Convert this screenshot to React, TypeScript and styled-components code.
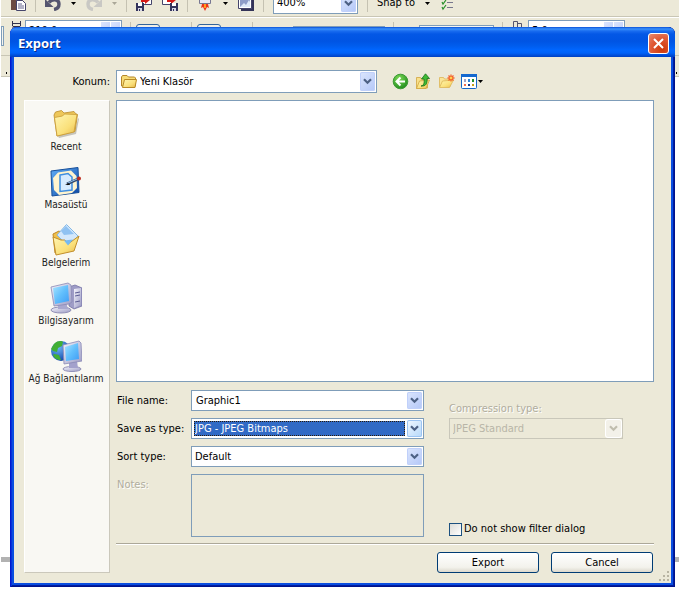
import React, { useState } from "react";
import styled, { createGlobalStyle, css } from "styled-components";

const face = "#ece9d8";
const fieldBorder = "#7f9db9";

const GlobalStyle = createGlobalStyle`
  * { box-sizing: border-box; }
  body {
    margin: 0;
    background: #fff;
    color: #000;
    font: 11px/14px "DejaVu Sans Condensed", "DejaVu Sans", sans-serif;
  }
  button, input, select, textarea { font: inherit; color: inherit; margin: 0; }
  svg { display: block; flex: none; }
`;

/* ---------- application behind the dialog ---------- */

const Page = styled.div`
  position: relative;
  min-height: 100vh;
  overflow: hidden;
`;

const Workspace = styled.div`
  margin-top: -10px;
  border-left: 1px solid #fff;
`;

const Toolbar = styled.div`
  display: flex;
  align-items: center;
  gap: 10px;
  height: 27px;
  padding-left: 10px;
  background: ${face};
  border-bottom: 1px solid #c9c6b5;
`;

const PropertyBar = styled.div`
  display: flex;
  align-items: flex-start;
  height: 39px;
  padding-top: 2px;
  background: ${face};
  border-top: 1px solid #fff;
  border-bottom: 1px solid #c9c6b5;
`;

const Ruler = styled.div`
  display: flex;
  justify-content: space-between;
  align-items: flex-end;
  height: 21px;
  padding: 0 2px 2px 5px;
  background: ${face};
  border-bottom: 1px solid #c9c6b5;
`;

const Tick = styled.i`
  width: 1px;
  height: 2px;
  background: #000;
`;

const PageEdge = styled.div`
  height: 5px;
  margin-top: 480px;
  background: #b2b2b2;
`;

const Divider = styled.i`
  flex: none;
  width: 1px;
  height: 18px;
  margin: 0 -1px;
  background: #c5c2b2;
`;

const ToolButton = styled.button<{ $width?: number }>`
  flex: none;
  display: flex;
  justify-content: center;
  width: ${(p) => p.$width ?? 16}px;
  padding: 0;
  border: 0;
  background: none;
`;

const TextTool = styled.button`
  flex: none;
  padding: 0;
  border: 0;
  background: none;
`;

const PropertySlot = styled.div<{ $before: number; $width: number; $top?: number }>`
  flex: none;
  width: ${(p) => p.$width}px;
  margin: ${(p) => p.$top ?? 0}px 0 0 ${(p) => p.$before}px;
`;

const Spinner = styled.div`
  display: flex;
  height: 21px;
  padding: 1px;
  background: #fff;
  border: 1px solid ${fieldBorder};
`;

const SpinnerInput = styled.input`
  flex: 1;
  min-width: 0;
  padding: 0 2px;
  border: 0;
  background: none;
  outline: 0;
`;

const SpinnerKey = styled.button`
  width: 9px;
  margin-left: 1px;
  padding: 0;
  border: 0;
  background: linear-gradient(135deg, #dbe4fd, #b4c8f6);
`;

const Toggle = styled.button`
  display: block;
  width: 100%;
  height: 20px;
  border: 1px solid #33659b;
  border-radius: 3px;
  background: #f1efe6;
`;

const FlatField = styled.div`
  height: 20px;
  border: 1px solid ${fieldBorder};
  background: #f6f5ee;
`;

const Stroke = styled.i`
  display: block;
  width: 1px;
  height: 20px;
  background: #c5c2b2;
`;

/* ---------- dialog ---------- */

const Dialog = styled.section`
  position: absolute;
  top: 27px;
  left: 10px;
  right: 4px;
  padding: 0 4px 4px;
  border-radius: 7px 7px 0 0;
  background: #0a4ee0;
  box-shadow: inset 1px 0 #0019cf, inset -1px 0 #00138c, inset 0 -1px #00138c,
    inset 2px 0 #0831d9, inset -2px 0 #001da0, inset 0 -2px #001da0;
`;

const TitleBar = styled.header`
  display: flex;
  align-items: center;
  justify-content: space-between;
  height: 30px;
  margin: 0 -4px;
  padding: 2px 6px 0 8px;
  border-radius: 7px 7px 0 0;
  background: linear-gradient(
    #0a50d8 0, #3a92fb 2px, #1a6cf0 4px, #0458e6 7px, #0054e3 14px,
    #005dee 19px, #0066ff 23px, #0062f8 26px, #0050dd 28px, #0040c0 30px
  );
`;

const Title = styled.h1`
  margin: 0;
  color: #fff;
  font: bold 13px/18px "Open Sans", "Noto Sans", sans-serif;
  text-shadow: 1px 1px #0a2a86;
`;

const CloseButton = styled.button`
  display: grid;
  place-items: center;
  width: 21px;
  height: 21px;
  padding: 0;
  border: 1px solid #fff;
  border-radius: 3px;
  background: radial-gradient(circle at 70% 80%, #cf3a0a, #e05a37 55%, #e98b70);
`;

const Body = styled.div`
  display: grid;
  grid-template-columns: 86px minmax(0, 1fr);
  gap: 7px 6px;
  padding: 13px 17px 10px 10px;
  background: ${face};
`;

const LookInLabel = styled.label`
  justify-self: end;
  align-self: center;
`;

const LookInRow = styled.div`
  display: flex;
  align-items: center;
`;

const LookInTools = styled.div`
  display: flex;
  align-items: center;
  gap: 6px;
  margin-left: 15px;
`;

const Places = styled.nav`
  display: flex;
  flex-direction: column;
  gap: 12px;
  padding: 7px 2px 0 0;
  background: #f9f8f3;
  border: 1px solid #fff;
  border-right-color: #cbc8bb;
  border-bottom-color: #cbc8bb;
  font-size: 10px;
`;

const Place = styled.a`
  display: flex;
  flex-direction: column;
  align-items: center;
  color: #222;
  text-decoration: none;
  white-space: nowrap;
`;

const Main = styled.main`
  display: flex;
  flex-direction: column;
`;

const FileList = styled.div`
  height: 282px;
  background: #fff;
  border: 1px solid ${fieldBorder};
`;

const Form = styled.form`
  display: grid;
  grid-template-columns: minmax(0, 1fr) 205px;
  gap: 25px;
  margin-top: 8px;
`;

const Fields = styled.div`
  display: grid;
  grid-template-columns: 75px minmax(0, 1fr);
  row-gap: 7px;
`;

const Options = styled.div`
  display: flex;
  flex-direction: column;
  padding-top: 12px;
`;

const etched = css`
  color: #b0ad9e;
  text-shadow: 1px 1px #fff;
`;

const FieldLabel = styled.label<{ $disabled?: boolean }>`
  padding: 4px 0 0 1px;
  white-space: nowrap;
  ${(p) => p.$disabled && etched}
`;

const CompressionLabel = styled.label`
  margin-bottom: 2px;
  ${etched}
`;

const Frame = styled.div<{ $disabled?: boolean; $tall?: boolean; $wide?: boolean }>`
  display: flex;
  gap: 1px;
  height: ${(p) => (p.$tall ? 23 : 21)}px;
  ${(p) => p.$wide && "flex: 0 1 261px;"}
  padding: 1px;
  border: 1px solid ${(p) => (p.$disabled ? "#c9c7ba" : fieldBorder)};
  background: ${(p) => (p.$disabled ? face : "#fff")};
  color: ${(p) => (p.$disabled ? "#aca899" : "#000")};
`;

const CompressionFrame = styled(Frame)`
  width: 174px;
`;

const Select = styled.select<{ $focused?: boolean }>`
  appearance: none;
  flex: 1;
  min-width: 0;
  margin: 1px;
  padding: 0 1px;
  border: 0;
  border-radius: 0;
  outline: 0;
  background: none;
  opacity: 1;
  &:disabled { color: #b8b5a7; opacity: 1; }
  ${(p) =>
    p.$focused &&
    css`
      color: #fff;
      background: #316ac5;
      outline: 1px dotted #2a1a08;
      outline-offset: -1px;
    `}
`;

const TextField = styled.input`
  flex: 1;
  min-width: 0;
  padding: 0 3px;
  border: 0;
  outline: 0;
  background: none;
`;

const ArrowCap = styled.span<{ $disabled?: boolean; $hot?: boolean }>`
  flex: none;
  display: grid;
  place-items: center;
  width: 15px;
  border-radius: 2px;
  pointer-events: none;
  color: ${(p) => (p.$disabled ? "#c0bdae" : "#4d6185")};
  background: ${(p) =>
    p.$disabled
      ? "#f3f1e9"
      : p.$hot
        ? "linear-gradient(135deg, #f2f8ff, #b5d8fa)"
        : "linear-gradient(135deg, #dce6fd, #b3c7f8)"};
  box-shadow: ${(p) => (p.$disabled ? "0 0 0 1px #fff" : p.$hot ? "inset 0 0 0 1px #9cc4f2" : "inset 0 0 0 1px #c0d0fa")};
`;

const Notes = styled.textarea`
  display: block;
  width: 100%;
  height: 63px;
  resize: none;
  border: 1px solid ${fieldBorder};
  border-radius: 0;
  background: ${face};
`;

const Check = styled.label`
  display: flex;
  align-items: center;
  gap: 2px;
  margin-top: auto;
  padding-bottom: 1px;
  white-space: nowrap;
`;

const CheckBox = styled.input`
  appearance: none;
  width: 13px;
  height: 13px;
  border: 1px solid #1c5180;
  background: linear-gradient(135deg, #dcdcd7, #fff);
  &:checked { background: #21a121; box-shadow: inset 0 0 0 2px #fff; }
`;

const Rule = styled.hr`
  width: 100%;
  height: 2px;
  margin: 6px 0 7px;
  border: 0;
  border-top: 1px solid #aca899;
  border-bottom: 1px solid #fff;
`;

const Actions = styled.footer`
  display: flex;
  justify-content: flex-end;
  gap: 12px;
  padding-right: 1px;
`;

const PushButton = styled.button`
  width: 102px;
  height: 21px;
  padding: 0;
  border: 1px solid #003c74;
  border-radius: 3px;
  background: linear-gradient(#fff, #f3f2ec 75%, #dcd8cc);
`;

const Grip = styled.svg`
  position: absolute;
  right: 5px;
  bottom: 5px;
`;

/* ---------- drawings ---------- */

const Chevron = () => (
  <svg width="9" height="7" viewBox="0 0 9 7" aria-hidden="true">
    <path d="M1 1.2 4.5 4.7 8 1.2" fill="none" stroke="currentColor" strokeWidth="2.2" />
  </svg>
);

const DownMark = ({ color = "#000" }: { color?: string }) => (
  <svg width="5" height="3" viewBox="0 0 5 3" aria-hidden="true">
    <path d="M0 0h5L2.5 3z" fill={color} />
  </svg>
);

const CurvedArrow = ({ color, flip }: { color: string; flip?: boolean }) => (
  <svg width="16" height="16" viewBox="0 0 16 16" aria-hidden="true">
    <g transform={flip ? "translate(16 0) scale(-1 1)" : undefined}>
      <path d="M4 7.500C7 3.500 14 4 14 9c0 3-2 5-5 5.500" fill="none" stroke={color} strokeWidth="3.400" />
      <path d="M0 4v8h8.500z" fill={color} />
    </g>
  </svg>
);

const PasteIcon = () => (
  <svg width="15" height="16" viewBox="0 0 15 16" aria-hidden="true">
    <path d="M0 0h12v15H0z" fill="#6b4b42" />
    <path d="M5.500 5.500h6l3 3v7h-9z" fill="#fff" stroke="#45456b" />
    <path d="M7 9h4M7 11h6M7 13h6" stroke="#66668e" />
  </svg>
);

const Disk = ({ x }: { x: number }) => (
  <g transform={`translate(${x} 8)`}>
    <path d="M0 0h8v8H0z" fill="#34345c" />
    <path d="M2 0h4v3H2z" fill="#fff" />
    <path d="M2 5h4v3H2z" fill="#d8d8e6" />
    <path d="M3 6h1v2H3z" fill="#34345c" />
  </g>
);

const ImportIcon = () => (
  <svg width="16" height="16" viewBox="0 0 16 16" aria-hidden="true">
    <path d="M6.500-1h9v10.500h-9z" fill="#fff" stroke="#45456b" />
    <path d="M5 4h4V1l5 4-5 4V7H5z" fill="#d51b18" />
    <Disk x={0} />
  </svg>
);

const ExportIcon = () => (
  <svg width="16" height="16" viewBox="0 0 16 16" aria-hidden="true">
    <path d="M.500-1h9v10.500h-9z" fill="#fff" stroke="#45456b" />
    <path d="M5 4h4V1l5 4-5 4V7H5z" fill="#d51b18" />
    <Disk x={8} />
  </svg>
);

const LauncherIcon = () => (
  <svg width="16" height="16" viewBox="0 0 16 16" aria-hidden="true">
    <path d="M2.500-1h11v9.500h-11z" fill="#e9eaf5" stroke="#777792" />
    <path d="M5 9h6l1 4-2-1-2 4-2-4-2 1z" fill="#ee351d" />
    <path d="M7 9h2v4H7z" fill="#ff9d20" />
  </svg>
);

const WelcomeIcon = () => (
  <svg width="16" height="16" viewBox="0 0 16 16" aria-hidden="true">
    <path d="M3 3h13v13H3z" fill="#343458" />
    <path d="M.500.500h13v13H.500z" fill="#fff" stroke="#45456b" />
    <path d="M2 3h10v9H2z" fill="#8d9cc8" />
    <path d="m2 12 4-4 2 2 3-5 1 2v5z" fill="#dde8f8" />
  </svg>
);

const OptionsIcon = () => (
  <svg width="14" height="16" viewBox="0 0 14 16" aria-hidden="true">
    <path d="M6 2.500h6M6 7.500h6M6 12.500h6" stroke="#77778c" />
    <path d="m1 2 1 2 3-4M1 7l1 2 3-4M1 12l1 2 3-4" fill="none" stroke="#27902a" strokeWidth="1.200" />
  </svg>
);

const WidthIcon = () => (
  <svg width="9" height="9" viewBox="0 0 9 9" aria-hidden="true">
    <path d="M.500 0v5M8.500 0v5M0 2.500h9M1 5.500h7v4H1z" fill="none" stroke="#33334d" />
  </svg>
);

const OffsetIcon = () => (
  <svg width="9" height="9" viewBox="0 0 9 9" aria-hidden="true">
    <path d="M.500.500h4v9h-4zM4.500 2.500h4v7h-4z" fill="none" stroke="#55556d" />
  </svg>
);

const SharedGradients = () => (
  <svg width="0" height="0" viewBox="0 0 1 1" aria-hidden="true">
    <defs>
      <linearGradient id="gold" x1="0" y1="0" x2="1" y2="1">
        <stop offset="0" stopColor="#fff6b4" />
        <stop offset=".6" stopColor="#fae07a" />
        <stop offset="1" stopColor="#e6b649" />
      </linearGradient>
      <linearGradient id="screen" x1="0" y1="0" x2="1" y2="1">
        <stop offset="0" stopColor="#a7e4ff" />
        <stop offset=".5" stopColor="#62bffc" />
        <stop offset="1" stopColor="#3f9df5" />
      </linearGradient>
      <linearGradient id="metal" x1="0" y1="0" x2="1" y2="1">
        <stop offset="0" stopColor="#f4f4fc" />
        <stop offset="1" stopColor="#9c9bc4" />
      </linearGradient>
      <linearGradient id="royal" x1="0" y1="0" x2="1" y2="1">
        <stop offset="0" stopColor="#61aef6" />
        <stop offset="1" stopColor="#0c47a5" />
      </linearGradient>
      <radialGradient id="leaf" cx=".4" cy=".3" r=".8">
        <stop offset="0" stopColor="#7edb56" />
        <stop offset="1" stopColor="#178418" />
      </radialGradient>
      <radialGradient id="sea" cx=".35" cy=".3" r=".8">
        <stop offset="0" stopColor="#6fb9fa" />
        <stop offset="1" stopColor="#0c3da0" />
      </radialGradient>
    </defs>
  </svg>
);

const SmallFolder = () => (
  <svg width="16" height="15" viewBox="0 0 16 15" aria-hidden="true">
    <path d="M.500 12V3l1-1.500h4.500L7.500 3h6l1 1v8z" fill="#f7dc78" stroke="#b5862a" />
    <path d="m1.500 13.500 2-8h12l-1.500 8z" fill="url(#gold)" stroke="#b98a26" />
  </svg>
);

const BackIcon = () => (
  <svg width="17" height="17" viewBox="0 0 17 17" aria-hidden="true">
    <circle cx="8.500" cy="8.500" r="7.300" fill="url(#leaf)" stroke="#3c9a35" />
    <path d="M13 8.500H5M8.500 4.500l-4 4 4 4" fill="none" stroke="#fff" strokeWidth="2" />
  </svg>
);

const UpIcon = () => (
  <svg width="17" height="17" viewBox="0 0 17 17" aria-hidden="true">
    <path d="M1.500 15.500v-11h4l1 1.500h6v9z" fill="#f8e08a" stroke="#d0a440" strokeWidth=".8" />
    <path d="m1.500 15.500 3-7.500 10-1-3.500 8.500z" fill="url(#gold)" stroke="#d0a440" strokeWidth=".8" />
    <path d="M6 13c3-.500 3.500-3 3-7H6.500L10.500.800 14.500 5.500H12c.500 5-1 8-6 7.500z" fill="#3fba35" stroke="#18711a" strokeWidth=".8" />
  </svg>
);

const NewFolderIcon = () => (
  <svg width="17" height="17" viewBox="0 0 17 17" aria-hidden="true">
    <path d="M1.500 13.500v-9h4l1 1.500H12v7.500z" fill="#fae596" stroke="#dcb555" strokeWidth=".8" />
    <path d="m1.500 14.500 3-6.500 11-1-4 7.500z" fill="url(#gold)" stroke="#dcb555" strokeWidth=".8" />
    <path d="M13 1.500v7M9.500 5h7M10.500 2.500l5 5M15.500 2.500l-5 5" stroke="#f3622b" strokeWidth="1.300" />
    <circle cx="13" cy="5" r="1.300" fill="#ffd24d" />
  </svg>
);

const ViewIcon = () => (
  <svg width="16" height="15" viewBox="0 0 16 15" aria-hidden="true">
    <rect x=".5" y=".5" width="15" height="14" rx="1" fill="#fff" stroke="#1468c8" />
    <path d="M0 0h16v3H0z" fill="#1569cf" />
    <path d="M3 5h2v3H3z" fill="#a3a3c6" />
    <path d="M7 5h2v3H7z" fill="#2d85d8" />
    <path d="M11 5h2v3h-2z" fill="#22902b" />
    <path d="M3 10h2v2H3z" fill="#f3714c" />
    <path d="M7 10h2v2H7z" fill="#12398c" />
    <path d="M11 10h2v2h-2z" fill="#c7a014" />
  </svg>
);

const RecentIcon = () => (
  <svg width="32" height="32" viewBox="0 0 32 32" aria-hidden="true">
    <path d="m8 28 17-4 3-14 1 1-3 15-17 4z" fill="#7a7567" opacity=".4" />
    <path d="M4 7 5.500 4l6-1.500L14 5l10-1.500 1.500 2 2 1-2.500 17L7 28z" fill="#eec75a" stroke="#b98b2c" strokeWidth=".8" />
    <path d="m4.500 9.500 8-1.500 2-2 12.500.500L24 24 7 28z" fill="url(#gold)" stroke="#c99a35" strokeWidth=".8" />
  </svg>
);

const DesktopIcon = () => (
  <svg width="32" height="32" viewBox="0 0 32 32" aria-hidden="true">
    <path d="m1 5 27-3.500 1 25L2 30z" fill="url(#royal)" stroke="#174f99" />
    <path d="m8 6.500 13-2 5.500 5.500.500 12-5 5-13 2-5-5-1-12z" fill="#fff4ce" />
    <path d="m10 9 8-1.500 4 3.500v13l-12 1.500z" fill="#d6ebff" stroke="#3f8ee0" strokeWidth="1.500" />
    <path d="m17 18 11-5" stroke="#32496d" strokeWidth="3" />
    <path d="m18 17 9-4" stroke="#91c1ee" />
    <path d="m15 19 4-2 1 2z" fill="#111" />
    <circle cx="29" cy="12.500" r="2" fill="#bd2b1d" />
  </svg>
);

const DocumentsIcon = () => (
  <svg width="32" height="32" viewBox="0 0 32 32" aria-hidden="true">
    <path d="m3 10 6-3 3 2 14 3-3 14-18 3z" fill="#f0bf4a" stroke="#bd8827" />
    <path d="M16.500.500 28 12 19 23 7 11z" fill="#d3e8fc" stroke="#84b8e5" />
    <path d="m11 7 5-5 8 8-10 1z" fill="#8fc2f2" />
    <path d="m3 13 8 3 4 0 3 4L29 12l-5 15-18 4z" fill="url(#gold)" stroke="#c28f2c" />
    <path d="m14 16.500 9-1-5 6z" fill="#75baf3" />
  </svg>
);

const ComputerIcon = () => (
  <svg width="32" height="32" viewBox="0 0 32 32" aria-hidden="true">
    <path d="m19 5 6-2 7 3v18l-8 3-5-3z" fill="#9e9cc6" stroke="#7775a6" strokeWidth=".8" />
    <path d="m24 7 7-1v17l-7 3z" fill="url(#metal)" />
    <path d="m25 11 5-1M25 14l5-1M25 20l5-1" stroke="#5c5d94" />
    <ellipse cx="11" cy="28" rx="10" ry="3" fill="url(#metal)" stroke="#9190b7" />
    <path d="m8 21 8-1 2 7H8z" fill="#a9a8cf" />
    <path d="m1 5 17-4 3 2 1 17-3 2-15 2z" fill="url(#metal)" stroke="#8a89b5" strokeWidth=".8" />
    <path d="m3 6 15-3 1 16-14 3z" fill="url(#screen)" />
  </svg>
);

const NetworkIcon = () => (
  <svg width="32" height="32" viewBox="0 0 32 32" aria-hidden="true">
    <circle cx="11" cy="11" r="10" fill="url(#sea)" />
    <path d="M4 4c4-4 8-3 9-2l-1 4-4 2-1 4-4-1-2-2zM4 14l5 1 2 5c-4 0-7-2-8-5z" fill="#42af35" />
    <ellipse cx="22" cy="29" rx="9" ry="2.500" fill="url(#metal)" stroke="#9190b7" />
    <path d="m19 22 8-1 1 7h-9z" fill="#a3a1cc" />
    <path d="m13 5 16-4 2 2 1 18-18 3z" fill="url(#metal)" stroke="#8a89b5" strokeWidth=".8" />
    <path d="m15 7 13-4 1 16-13 2z" fill="url(#screen)" />
  </svg>
);

const places = [
  { name: "Recent", icon: <RecentIcon /> },
  { name: "Masaüstü", icon: <DesktopIcon /> },
  { name: "Belgelerim", icon: <DocumentsIcon /> },
  { name: "Bilgisayarım", icon: <ComputerIcon /> },
  { name: "Ağ Bağlantılarım", icon: <NetworkIcon /> },
];

const ZoomFrame = styled(Frame)`
  flex: none;
  width: 85px;
`;

const FolderSlot = styled.span`
  align-self: center;
  margin-left: 3px;
`;

const ViewButton = styled.button`
  display: flex;
  align-items: center;
  gap: 1px;
  padding: 0;
  border: 0;
  background: none;
`;

const Application = () => (
  <Workspace>
    <Toolbar>
      <ToolButton $width={15} aria-label="Paste"><PasteIcon /></ToolButton>
      <Divider />
      <ToolButton aria-label="Undo"><CurvedArrow color="#55556f" /></ToolButton>
      <ToolButton $width={5} aria-label="Undo list"><DownMark /></ToolButton>
      <ToolButton aria-label="Redo"><CurvedArrow color="#c9c8c4" flip /></ToolButton>
      <ToolButton $width={5} aria-label="Redo list"><DownMark color="#aaa798" /></ToolButton>
      <Divider />
      <ToolButton aria-label="Import"><ImportIcon /></ToolButton>
      <ToolButton aria-label="Export file"><ExportIcon /></ToolButton>
      <Divider />
      <ToolButton aria-label="Application launcher"><LauncherIcon /></ToolButton>
      <ToolButton $width={5} aria-label="Launcher list"><DownMark /></ToolButton>
      <ToolButton aria-label="Welcome screen"><WelcomeIcon /></ToolButton>
      <Divider />
      <ZoomFrame>
        <Select aria-label="Zoom level" defaultValue="400%"><option>400%</option></Select>
        <ArrowCap><Chevron /></ArrowCap>
      </ZoomFrame>
      <Divider />
      <TextTool>Snap to</TextTool>
      <ToolButton $width={5} aria-label="Snap list"><DownMark /></ToolButton>
      <ToolButton aria-label="Options"><OptionsIcon /></ToolButton>
    </Toolbar>
    <PropertyBar>
      <PropertySlot $before={0} $width={3} $top={6}><FlatField /></PropertySlot>
      <PropertySlot $before={8} $width={9} $top={1}><WidthIcon /></PropertySlot>
      <PropertySlot $before={4} $width={97}>
        <Spinner>
          <SpinnerInput aria-label="Paper width" defaultValue="210,0" />
          <SpinnerKey aria-label="Less" /><SpinnerKey aria-label="More" />
        </Spinner>
      </PropertySlot>
      <PropertySlot $before={8} $width={1} $top={2}><Stroke /></PropertySlot>
      <PropertySlot $before={5} $width={24} $top={4}><Toggle aria-label="Portrait" /></PropertySlot>
      <PropertySlot $before={31} $width={1} $top={2}><Stroke /></PropertySlot>
      <PropertySlot $before={5} $width={24} $top={4}><Toggle aria-label="All pages" /></PropertySlot>
      <PropertySlot $before={31} $width={1} $top={2}><Stroke /></PropertySlot>
      <PropertySlot $before={40} $width={92} $top={6}><FlatField /></PropertySlot>
      <PropertySlot $before={8} $width={1} $top={2}><Stroke /></PropertySlot>
      <PropertySlot $before={25} $width={75} $top={5}><FlatField /></PropertySlot>
      <PropertySlot $before={8} $width={1} $top={2}><Stroke /></PropertySlot>
      <PropertySlot $before={10} $width={9} $top={1}><OffsetIcon /></PropertySlot>
      <PropertySlot $before={6} $width={97}>
        <Spinner>
          <SpinnerInput aria-label="Duplicate distance" defaultValue="5,0" />
          <SpinnerKey aria-label="Less" /><SpinnerKey aria-label="More" />
        </Spinner>
      </PropertySlot>
    </PropertyBar>
    <Ruler><Tick /><Tick /></Ruler>
    <PageEdge />
  </Workspace>
);

export default function App() {
  const [skipFilter, setSkipFilter] = useState(false);

  return (
    <>
      <GlobalStyle />
      <Page>
        <SharedGradients />
        <Application />
        <Dialog role="dialog" aria-labelledby="dialog-title">
          <TitleBar>
            <Title id="dialog-title">Export</Title>
            <CloseButton aria-label="Close">
              <svg width="11" height="11" viewBox="0 0 11 11" aria-hidden="true">
                <path d="m1 1 9 9M10 1l-9 9" stroke="#fff" strokeWidth="2" />
              </svg>
            </CloseButton>
          </TitleBar>
          <Body>
            <LookInLabel htmlFor="look-in">Konum:</LookInLabel>
            <LookInRow>
              <Frame $tall $wide>
                <FolderSlot><SmallFolder /></FolderSlot>
                <Select id="look-in" defaultValue="Yeni Klasör"><option>Yeni Klasör</option></Select>
                <ArrowCap><Chevron /></ArrowCap>
              </Frame>
              <LookInTools>
                <ToolButton $width={17} aria-label="Back"><BackIcon /></ToolButton>
                <ToolButton $width={17} aria-label="Up one level"><UpIcon /></ToolButton>
                <ToolButton $width={17} aria-label="New folder"><NewFolderIcon /></ToolButton>
                <ViewButton aria-label="View menu"><ViewIcon /><DownMark /></ViewButton>
              </LookInTools>
            </LookInRow>
            <Places>
              {places.map((place) => (
                <Place key={place.name} href="#">
                  {place.icon}
                  <span>{place.name}</span>
                </Place>
              ))}
            </Places>
            <Main>
              <FileList />
              <Form id="export-form" onSubmit={(e) => e.preventDefault()}>
                <Fields>
                  <FieldLabel htmlFor="file-name">File name:</FieldLabel>
                  <Frame>
                    <TextField id="file-name" defaultValue="Graphic1" />
                    <ArrowCap><Chevron /></ArrowCap>
                  </Frame>
                  <FieldLabel htmlFor="file-type">Save as type:</FieldLabel>
                  <Frame>
                    <Select id="file-type" $focused defaultValue="JPG - JPEG Bitmaps">
                      <option>JPG - JPEG Bitmaps</option>
                    </Select>
                    <ArrowCap $hot><Chevron /></ArrowCap>
                  </Frame>
                  <FieldLabel htmlFor="sort-type">Sort type:</FieldLabel>
                  <Frame>
                    <Select id="sort-type" defaultValue="Default"><option>Default</option></Select>
                    <ArrowCap><Chevron /></ArrowCap>
                  </Frame>
                  <FieldLabel htmlFor="notes" $disabled>Notes:</FieldLabel>
                  <Notes id="notes" disabled />
                </Fields>
                <Options>
                  <CompressionLabel htmlFor="compression">Compression type:</CompressionLabel>
                  <CompressionFrame $disabled>
                    <Select id="compression" disabled defaultValue="JPEG Standard">
                      <option>JPEG Standard</option>
                    </Select>
                    <ArrowCap $disabled><Chevron /></ArrowCap>
                  </CompressionFrame>
                  <Check>
                    <CheckBox
                      type="checkbox"
                      checked={skipFilter}
                      onChange={(e) => setSkipFilter(e.target.checked)}
                    />
                    Do not show filter dialog
                  </Check>
                </Options>
              </Form>
              <Rule />
              <Actions>
                <PushButton type="submit" form="export-form">Export</PushButton>
                <PushButton type="button">Cancel</PushButton>
              </Actions>
            </Main>
          </Body>
          <Grip width="11" height="11" viewBox="0 0 11 11" aria-hidden="true">
            <path d="M8 0h2v2H8zM4 4h2v2H4zM8 4h2v2H8zM0 8h2v2H0zM4 8h2v2H4zM8 8h2v2H8z" fill="#b8b4a2" />
          </Grip>
        </Dialog>
      </Page>
    </>
  );
}
